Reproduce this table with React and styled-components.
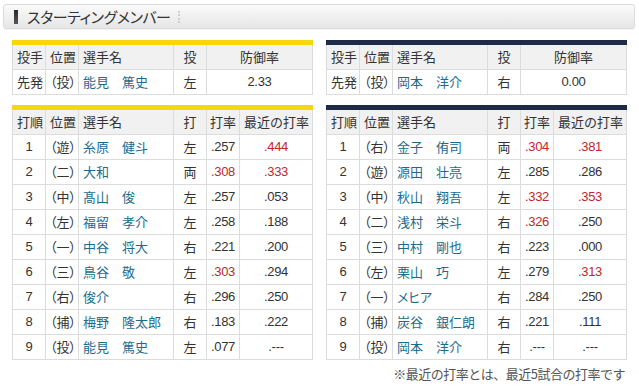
import React from "react";
import styled, { createGlobalStyle } from "styled-components";

const Global = createGlobalStyle`
  html, body { margin: 0; padding: 0; background: #fff; }
  body { font-family: "Liberation Sans", "Noto Sans CJK JP", sans-serif; color: #333; }
`;

const Page = styled.div`
  width: 639px;
  height: 388px;
  box-sizing: border-box;
  padding: 4px 4px 0 3px;
  display: flex;
  flex-direction: column;
`;

const TitleBar = styled.div`
  height: 23px;
  border: 1px solid #dcdcdc;
  border-radius: 3px;
  background: linear-gradient(#fbfbfb 0%, #f1f1f1 45%, #e6e6e6 100%);
  display: flex;
  align-items: center;
  padding-left: 10px;
  box-shadow: 0 1px 1px rgba(0,0,0,0.05);
`;

const TitleMark = styled.span`
  width: 4px;
  height: 14px;
  background: linear-gradient(#2a2a2a, #555);
  margin-right: 9px;
`;

const TitleText = styled.span`
  font-family: "Noto Sans CJK JP", sans-serif;
  font-size: 15px;
  font-feature-settings: "palt";
  letter-spacing: -0.4px;
  color: #333;
  line-height: 1;
`;

const TitleDots = styled.span`
  width: 0;
  height: 12px;
  border-left: 2px dotted #d0d0d0;
  margin-left: 7px;
`;

const Columns = styled.div`
  display: grid;
  grid-template-columns: 300px 300px;
  column-gap: 14px;
  padding-left: 9px;
  margin-top: 11px;
`;

const Side = styled.div`
  display: flex;
  flex-direction: column;
  gap: 10px;
`;

const Table = styled.table`
  width: 300px;
  table-layout: fixed;
  border-collapse: collapse;
  border-top: 5px solid ${(p) => p.$accent};
  font-size: 13px;
`;

const Cell = styled.td`
  height: 24px;
  padding: 0 0 0 ${(p) => (p.$align === "left" ? "4px" : "0")};
  border: 1px solid #dcdcdc;
  text-align: ${(p) => p.$align || "center"};
  white-space: nowrap;
  overflow: hidden;
  line-height: 24px;
  color: ${(p) => (p.$red ? "#c0262d" : p.$link ? "#1c6b8c" : "#333")};
  background: #fff;
  font-family: ${(p) =>
    p.$num ? `"Liberation Sans", sans-serif` : `"Noto Sans CJK JP", sans-serif`};
  font-feature-settings: "palt";
  letter-spacing: ${(p) => (p.$num ? "-0.3px" : "0")};
`;

const HeadCell = styled.th`
  height: 24px;
  padding: 0 0 0 ${(p) => (p.$align === "left" ? "4px" : "0")};
  border: 1px solid #dcdcdc;
  background: #f1f1f1;
  font-weight: normal;
  text-align: ${(p) => p.$align || "center"};
  white-space: nowrap;
  overflow: hidden;
  color: #333;
  line-height: 24px;
  font-family: "Noto Sans CJK JP", sans-serif;
`;

const Note = styled.div`
  text-align: right;
  font-family: "Noto Sans CJK JP", sans-serif;
  font-size: 13px;
  color: #555;
  padding-right: 10px;
  margin-top: 4px;
  letter-spacing: -0.5px;
`;

const teams = [
  {
    accent: "#f6d60c",
    pitcher: { name: "能見　篤史", hand: "左", era: "2.33" },
    lineup: [
      ["1", "（遊）", "糸原　健斗", "左", ".257", ".444", false, true],
      ["2", "（二）", "大和", "両", ".308", ".333", true, true],
      ["3", "（中）", "髙山　俊", "左", ".257", ".053"],
      ["4", "（左）", "福留　孝介", "左", ".258", ".188"],
      ["5", "（一）", "中谷　将大", "右", ".221", ".200"],
      ["6", "（三）", "鳥谷　敬", "左", ".303", ".294", true],
      ["7", "（右）", "俊介", "右", ".296", ".250"],
      ["8", "（捕）", "梅野　隆太郎", "右", ".183", ".222"],
      ["9", "（投）", "能見　篤史", "左", ".077", ".---"],
    ],
  },
  {
    accent: "#1f2a48",
    pitcher: { name: "岡本　洋介", hand: "右", era: "0.00" },
    lineup: [
      ["1", "（右）", "金子　侑司", "両", ".304", ".381", true, true],
      ["2", "（遊）", "源田　壮亮", "左", ".285", ".286"],
      ["3", "（中）", "秋山　翔吾", "左", ".332", ".353", true, true],
      ["4", "（二）", "浅村　栄斗", "右", ".326", ".250", true],
      ["5", "（三）", "中村　剛也", "右", ".223", ".000"],
      ["6", "（左）", "栗山　巧", "左", ".279", ".313", false, true],
      ["7", "（一）", "メヒア", "右", ".284", ".250"],
      ["8", "（捕）", "炭谷　銀仁朗", "右", ".221", ".111"],
      ["9", "（投）", "岡本　洋介", "右", ".---", ".---"],
    ],
  },
];

function PitcherTable({ accent, p }) {
  return (
    <Table $accent={accent}>
      <colgroup>
        <col style={{ width: 33 }} />
        <col style={{ width: 33 }} />
        <col style={{ width: 95 }} />
        <col style={{ width: 33 }} />
        <col style={{ width: 106 }} />
      </colgroup>
      <thead>
        <tr>
          <HeadCell $align="left">投手</HeadCell>
          <HeadCell $align="left">位置</HeadCell>
          <HeadCell $align="left">選手名</HeadCell>
          <HeadCell>投</HeadCell>
          <HeadCell>防御率</HeadCell>
        </tr>
      </thead>
      <tbody>
        <tr>
          <Cell $align="left">先発</Cell>
          <Cell $align="left">（投）</Cell>
          <Cell $align="left" $link>{p.name}</Cell>
          <Cell>{p.hand}</Cell>
          <Cell $num>{p.era}</Cell>
        </tr>
      </tbody>
    </Table>
  );
}

function LineupTable({ accent, rows }) {
  return (
    <Table $accent={accent}>
      <colgroup>
        <col style={{ width: 33 }} />
        <col style={{ width: 33 }} />
        <col style={{ width: 95 }} />
        <col style={{ width: 33 }} />
        <col style={{ width: 33 }} />
        <col style={{ width: 73 }} />
      </colgroup>
      <thead>
        <tr>
          <HeadCell $align="left">打順</HeadCell>
          <HeadCell $align="left">位置</HeadCell>
          <HeadCell $align="left">選手名</HeadCell>
          <HeadCell>打</HeadCell>
          <HeadCell>打率</HeadCell>
          <HeadCell $align="left">最近の打率</HeadCell>
        </tr>
      </thead>
      <tbody>
        {rows.map(([no, pos, name, bat, avg, recent, redAvg, redRecent]) => (
          <tr key={no}>
            <Cell $num>{no}</Cell>
            <Cell $align="left">{pos}</Cell>
            <Cell $align="left" $link>{name}</Cell>
            <Cell>{bat}</Cell>
            <Cell $num $red={redAvg}>{avg}</Cell>
            <Cell $num $red={redRecent}>{recent}</Cell>
          </tr>
        ))}
      </tbody>
    </Table>
  );
}

export default function App() {
  return (
    <>
      <Global />
      <Page>
        <TitleBar>
          <TitleMark />
          <TitleText>スターティングメンバー</TitleText>
          <TitleDots />
        </TitleBar>
        <Columns>
          {teams.map((t, i) => (
            <Side key={i}>
              <PitcherTable accent={t.accent} p={t.pitcher} />
              <LineupTable accent={t.accent} rows={t.lineup} />
            </Side>
          ))}
        </Columns>
        <Note>※最近の打率とは、最近5試合の打率です</Note>
      </Page>
    </>
  );
}
